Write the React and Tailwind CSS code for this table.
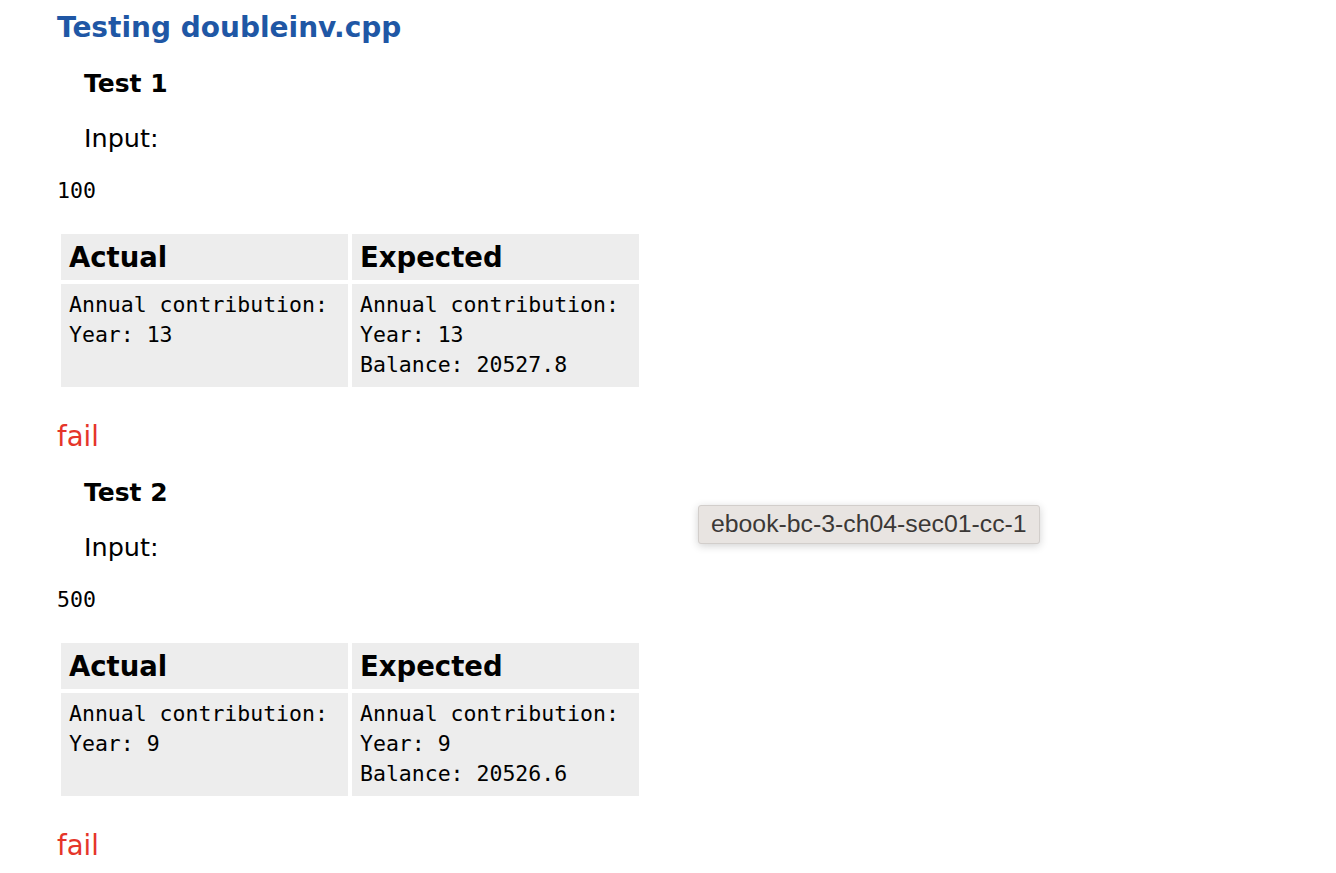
import React from 'react';

const tests = [
    { name: 'Test 1', input: '100', actual: ['Annual contribution:', 'Year: 13'], expected: ['Annual contribution:', 'Year: 13', 'Balance: 20527.8'] },
    { name: 'Test 2', input: '500', actual: ['Annual contribution:', 'Year: 9'], expected: ['Annual contribution:', 'Year: 9', 'Balance: 20526.6'] },
];

const sans = "font-['DejaVu_Sans',sans-serif]";
const mono = "font-['DejaVu_Sans_Mono',monospace]";

function TestBlock({ test, first }) {
    return (
        <div className={first ? 'mt-[25px]' : 'mt-[26px]'}>
            <h2 className="pl-[27px] text-[25px] leading-[30px] font-bold text-black">{test.name}</h2>
            <p className="mt-[23.5px] pl-[27px] text-[25.5px] leading-[30px] text-black">Input:</p>
            <pre className={`mt-[23.5px] ${mono} text-[21.5px] leading-[30px] text-black`}>{test.input}</pre>
            <table className="mt-[23.5px] border-separate border-spacing-[4px]">
                <thead>
                    <tr>
                        <th className="w-[287px] bg-[#ededed] px-2 py-[7px] text-left text-[27.5px] leading-[32px] font-bold">Actual</th>
                        <th className="w-[287px] bg-[#ededed] px-2 py-[7px] text-left text-[27.5px] leading-[32px] font-bold">Expected</th>
                    </tr>
                </thead>
                <tbody>
                    <tr>
                        <td className="bg-[#ededed] px-2 pt-[6px] pb-[7px] align-top">
                            <pre className={`${mono} text-[21.5px] leading-[30px]`}>{test.actual.join('\n')}</pre>
                        </td>
                        <td className="bg-[#ededed] px-2 pt-[6px] pb-[7px] align-top">
                            <pre className={`${mono} text-[21.5px] leading-[30px]`}>{test.expected.join('\n')}</pre>
                        </td>
                    </tr>
                </tbody>
            </table>
            <p className="mt-[29.5px] text-[27.5px] leading-[32px] text-[#e5352a]">fail</p>
        </div>
    );
}

export default function App() {
    return (
        <div className={`relative min-h-[873px] w-[1336px] bg-white ${sans} overflow-hidden`}>
            <div className="pl-[57px] pt-[12px]">
                <h1 className="text-[28px] leading-[32px] font-bold text-[#1f57a5]">Testing doubleinv.cpp</h1>
                {tests.map((t, i) => (
                    <TestBlock key={t.name} test={t} first={i === 0} />
                ))}
            </div>

            {/* hover tooltip */}
            <div className="absolute left-[698px] top-[505px] flex h-[39px] w-[342px] items-center rounded-[3px] border border-[#d2cecb] bg-[#e8e4e1] px-[12px] shadow-[0_2px_8px_rgba(0,0,0,0.18)]">
                <span className="font-['Liberation_Sans',sans-serif] text-[24.8px] leading-none text-[#3b3836] whitespace-nowrap">ebook-bc-3-ch04-sec01-cc-1</span>
            </div>
        </div>
    );
}
